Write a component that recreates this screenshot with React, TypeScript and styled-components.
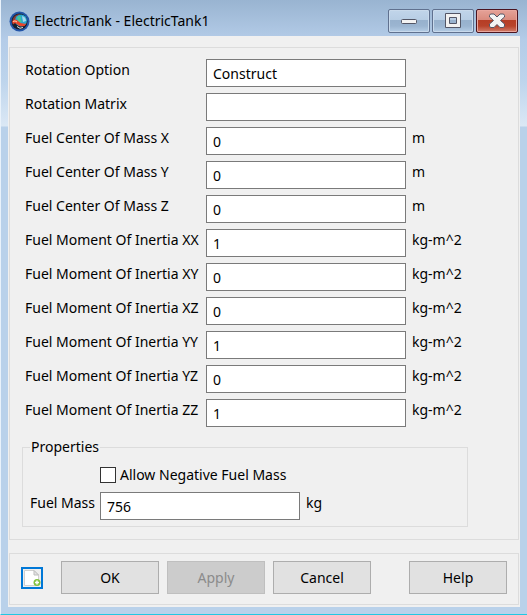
import React from "react";
import styled, { createGlobalStyle } from "styled-components";

const Global = createGlobalStyle`
  *, *::before, *::after { box-sizing: border-box; }
  html, body, #root { height: 100%; }
  body {
    margin: 0;
    background: #b9d1ea;
    color: #000;
    font-family: "Noto Sans", "Open Sans", sans-serif;
    font-size: 14px;
    line-height: 20px;
  }
  button, input { font: inherit; color: inherit; }
`;

const Window = styled.div`
  display: flex;
  flex-direction: column;
  min-height: 100%;
  padding: 0 7px 7px;
  border-left: 1px solid #e9f2fb;
  border-bottom: 1px solid #21c8e2;
  background:
    linear-gradient(to bottom, #99b4d1 0, #b4cce8 40px, #bdd4ec 80px, #dbe8f5 126px, transparent 127px) no-repeat,
    #b9d1ea;
`;

const TitleBar = styled.header`
  display: flex;
  align-items: center;
  gap: 4px;
  height: 36px;
  padding: 6px 2px 0 1px;
`;

const Title = styled.h1`
  flex: 1;
  margin: 0;
  font-size: 14px;
  font-weight: 400;
`;

const Controls = styled.div`
  display: flex;
  gap: 2px;
`;

const ControlButton = styled.button<{ $danger?: boolean }>`
  display: flex;
  align-items: center;
  justify-content: center;
  width: 42px;
  height: 24px;
  padding: 0;
  border: 1px solid ${(p) => (p.$danger ? "#4a1420" : "#60718f")};
  border-radius: 2px;
  box-shadow: inset 0 0 0 1px ${(p) => (p.$danger ? "#e9a79e" : "#c9daec")};
  background: ${(p) =>
    p.$danger
      ? "linear-gradient(#e5a298 0, #d98a7d 10px, #b53d25 10px, #b8432b 16px, #d27e6c 100%)"
      : "linear-gradient(#c1d5ea 0, #b7cde4 10px, #97b1cd 10px, #9bb5d1 16px, #b5cde6 100%)"};
`;

const Client = styled.main`
  display: flex;
  flex: 1;
  flex-direction: column;
  gap: 13px;
  padding: 11px 1px 2px;
  background: #f0f0f0;
`;

const Panel = styled.section`
  flex: 1;
  padding: 11px 15px 12px;
  border: 1px solid #dcdcdc;
`;

const Fields = styled.div`
  display: grid;
  gap: 6px;
`;

const Row = styled.div<{ $label: number }>`
  display: grid;
  grid-template-columns: ${(p) => p.$label}px 200px 1fr;
  column-gap: 6px;
  height: 28px;
  line-height: 22px;
`;

const Label = styled.label`
  white-space: nowrap;
`;

const Unit = styled.span`
  white-space: nowrap;
`;

const TextBox = styled.input`
  width: 100%;
  height: 28px;
  padding: 0 6px;
  border: 1px solid #7a7a7a;
  border-radius: 0;
  background: #fff;
  outline: none;
`;

const Group = styled.fieldset`
  display: grid;
  gap: 8px;
  margin: 10px 35px 0 -3px;
  padding: 9px 7px 6px;
  border: 1px solid #dcdcdc;
`;

const Legend = styled.legend`
  padding: 0 1px;
`;

const CheckRow = styled.label`
  display: flex;
  align-items: center;
  gap: 4px;
  height: 18px;
  padding-left: 70px;
`;

const CheckBox = styled.input`
  appearance: none;
  width: 16px;
  height: 16px;
  margin: 0;
  border: 1px solid #333;
  background: #fff;
`;

const Footer = styled.footer`
  display: flex;
  align-items: center;
  gap: 8px;
  height: 52px;
  padding: 0 11px 3px;
  border: 1px solid #dcdcdc;
`;

const ScriptButton = styled.button`
  display: flex;
  width: 22px;
  height: 22px;
  margin-right: 10px;
  padding: 0;
  border: 2px solid #0078d7;
  background: #eee;
`;

const PushButton = styled.button<{ $end?: boolean }>`
  width: 98px;
  height: 33px;
  margin-left: ${(p) => (p.$end ? "auto" : "0")};
  padding: 0;
  border: 1px solid #adadad;
  background: #e1e1e1;

  &:disabled {
    border-color: #bfbfbf;
    background: #cccccc;
    color: #8b8b8b;
  }
`;

const GlobeIcon = () => (
  <svg width="21" height="21" viewBox="0 0 21 21" aria-hidden="true">
    <circle cx="10.5" cy="10.5" r="10" fill="#2355a8" />
    <circle cx="10.5" cy="10.5" r="8" fill="#17202c" />
    <path d="M3.500 9 Q5 3.500 11 3 L9 7 L4 11Z" fill="#8c3c34" />
    <circle cx="12" cy="9.5" r="6" fill="#2aa6cf" />
    <path d="M8 6 q3 -2 4 0 q-1 3 1 4 q-2 3 -4 1z" fill="#47c795" />
    <path d="M13 5 q4 1 4 5 l-3 1z" fill="#a9d8ec" />
    <path d="M3 10.500 Q6 7 9 10 Q12 13.500 17.500 12.500 L15.500 15 Q10 16 7 12.500 Q5.500 11.500 4 13.500Z" fill="#e8442b" />
    <path d="M4 10.500 Q6 9 8 11" fill="none" stroke="#ffd6b0" />
    <path d="M8 15.500 q3 3 6 1" fill="none" stroke="#dfe7ee" />
  </svg>
);

const MinimizeIcon = () => (
  <svg width="18" height="8" viewBox="0 0 18 8" aria-hidden="true">
    <rect x="1.500" y="2.500" width="15" height="4" rx="1" fill="#f3f3f3" stroke="#535666" />
  </svg>
);

const MaximizeIcon = () => (
  <svg width="18" height="16" viewBox="0 0 18 16" aria-hidden="true">
    <path
      d="M1.500 .5H16.500V14.500H1.500Z M5.500 4.500V10.500H12.500V4.500Z"
      fill="#f1f1f1"
      fillRule="evenodd"
      stroke="#535666"
      strokeLinejoin="round"
    />
  </svg>
);

const CloseIcon = () => (
  <svg width="18" height="16" viewBox="0 0 18 16" aria-hidden="true">
    <path
      d="M2.500 1H6L9 4L12 1H15.500L16.500 2.500V4L12.500 7.500L16.500 11V13L15.500 14.500H12L9 11.500L6 14.500H2.500L1.500 13V11L5.500 7.500L1.500 4V2.500Z"
      fill="#f4f4f4"
      stroke="#535666"
      strokeLinejoin="round"
    />
  </svg>
);

const NewPageIcon = () => (
  <svg width="18" height="18" viewBox="0 0 18 18" aria-hidden="true">
    <path d="M1.500 1.500H11L15.500 6V16.500H1.500Z" fill="#fff" stroke="#d0d0d0" />
    <path d="M11 1.500V6H15.500Z" fill="#e4e4e4" stroke="#bdbdbd" />
    <circle cx="14" cy="13.500" r="3.500" fill="#83c341" />
    <path d="M14 11.500v4M12 13.500h4" stroke="#fff" strokeWidth="1.500" />
  </svg>
);

const fields = [
  { id: "option", label: "Rotation Option", value: "Construct", unit: "" },
  { id: "matrix", label: "Rotation Matrix", value: "", unit: "" },
  { id: "cmx", label: "Fuel Center Of Mass X", value: "0", unit: "m" },
  { id: "cmy", label: "Fuel Center Of Mass Y", value: "0", unit: "m" },
  { id: "cmz", label: "Fuel Center Of Mass Z", value: "0", unit: "m" },
  { id: "ixx", label: "Fuel Moment Of Inertia XX", value: "1", unit: "kg-m^2" },
  { id: "ixy", label: "Fuel Moment Of Inertia XY", value: "0", unit: "kg-m^2" },
  { id: "ixz", label: "Fuel Moment Of Inertia XZ", value: "0", unit: "kg-m^2" },
  { id: "iyy", label: "Fuel Moment Of Inertia YY", value: "1", unit: "kg-m^2" },
  { id: "iyz", label: "Fuel Moment Of Inertia YZ", value: "0", unit: "kg-m^2" },
  { id: "izz", label: "Fuel Moment Of Inertia ZZ", value: "1", unit: "kg-m^2" },
];

export default function App() {
  return (
    <>
      <Global />
      <Window>
        <TitleBar>
          <GlobeIcon />
          <Title>ElectricTank - ElectricTank1</Title>
          <Controls>
            <ControlButton aria-label="Minimize"><MinimizeIcon /></ControlButton>
            <ControlButton aria-label="Maximize"><MaximizeIcon /></ControlButton>
            <ControlButton aria-label="Close" $danger><CloseIcon /></ControlButton>
          </Controls>
        </TitleBar>
        <Client>
          <Panel>
            <Fields>
              {fields.map((f) => (
                <Row key={f.id} $label={175}>
                  <Label htmlFor={f.id}>{f.label}</Label>
                  <TextBox id={f.id} type="text" defaultValue={f.value} />
                  <Unit>{f.unit}</Unit>
                </Row>
              ))}
            </Fields>
            <Group>
              <Legend>Properties</Legend>
              <CheckRow>
                <CheckBox type="checkbox" />
                Allow Negative Fuel Mass
              </CheckRow>
              <Row $label={64}>
                <Label htmlFor="mass">Fuel Mass</Label>
                <TextBox id="mass" type="text" defaultValue="756" />
                <Unit>kg</Unit>
              </Row>
            </Group>
          </Panel>
          <Footer>
            <ScriptButton aria-label="Show script"><NewPageIcon /></ScriptButton>
            <PushButton>OK</PushButton>
            <PushButton disabled>Apply</PushButton>
            <PushButton>Cancel</PushButton>
            <PushButton $end>Help</PushButton>
          </Footer>
        </Client>
      </Window>
    </>
  );
}
